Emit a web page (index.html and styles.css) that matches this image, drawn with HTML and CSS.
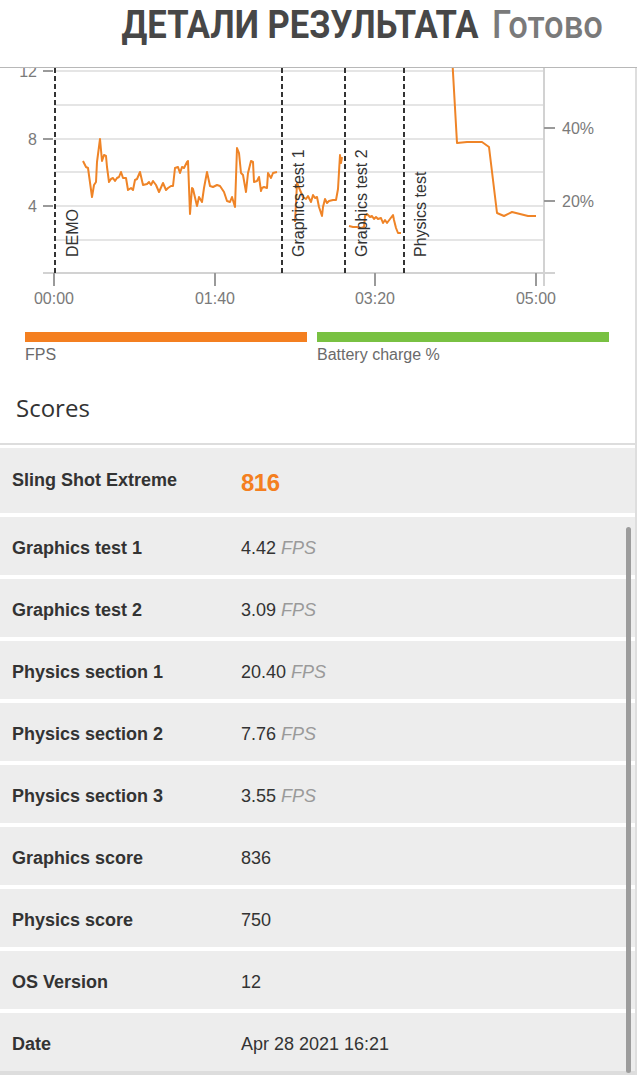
FILE: index.html
```html
<!DOCTYPE html>
<html lang="ru">
<head>
<meta charset="utf-8">
<title>Детали результата</title>
<link rel="stylesheet" href="styles.css">
</head>
<body>
<header class="topbar">
  <div class="title-group">
    <h1 class="title">ДЕТАЛИ РЕЗУЛЬТАТА</h1>
    <span class="done">Готово</span>
  </div>
</header>
<main class="content">
  <section class="chart">
    <svg class="chart-svg" width="635" height="250" viewBox="0 68 635 250" xmlns="http://www.w3.org/2000/svg">
      <g class="grid">
        <line x1="54" y1="71" x2="544" y2="71"/>
        <line x1="54" y1="105" x2="544" y2="105"/>
        <line x1="54" y1="139" x2="544" y2="139"/>
        <line x1="54" y1="172" x2="544" y2="172"/>
        <line x1="54" y1="206" x2="544" y2="206"/>
        <line x1="54" y1="240" x2="544" y2="240"/>
      </g>
      <line class="axis" x1="544" y1="60" x2="544" y2="286"/>
      <line class="axis" x1="43" y1="273" x2="555" y2="273"/>
      <g class="ticks">
        <line x1="43" y1="71" x2="53" y2="71"/>
        <line x1="43" y1="139" x2="53" y2="139"/>
        <line x1="43" y1="206" x2="53" y2="206"/>
        <line x1="54" y1="273" x2="54" y2="286"/>
        <line x1="215" y1="273" x2="215" y2="286"/>
        <line x1="375" y1="273" x2="375" y2="286"/>
        <line x1="536" y1="273" x2="536" y2="286"/>
        <line x1="544" y1="128" x2="555" y2="128"/>
        <line x1="544" y1="201" x2="555" y2="201"/>
      </g>
      <g class="tick-labels">
        <text x="37" y="77" text-anchor="end">12</text>
        <text x="37" y="145" text-anchor="end">8</text>
        <text x="37" y="212" text-anchor="end">4</text>
        <text x="54" y="304" text-anchor="middle">00:00</text>
        <text x="215" y="304" text-anchor="middle">01:40</text>
        <text x="375" y="304" text-anchor="middle">03:20</text>
        <text x="536" y="304" text-anchor="middle">05:00</text>
        <text x="562" y="134">40%</text>
        <text x="562" y="207">20%</text>
      </g>
      <g class="series">
        <polyline points="83,161 86,167 88,168 92,197 94,185 96,182 97,162 100,139 102,161 104,155 106,156 107,167 109,182 111,179 113,178 115,181 117,178 119,177 121,172 123,178 126,178 128,190 131,188 133,190 135,180 137,179 140,172 143,185 147,184 149,182 151,185 153,181 156,185 159,192 163,183 166,190 168,188 171,186 173,186 175,168 178,167 180,173 182,167 184,168 187,162 188,161 190,214 192,188 193,189 197,206 199,197 202,202 204,188 207,172 210,186 213,187 217,185 220,186 224,192 227,201 230,202 232,197 235,207 237,148 239,153 241,173 243,175 246,192 248,173 251,161 253,162 254,182 257,181 259,177 261,191 262,188 264,187 267,188 268,173 271,178 273,173 277,172"/>
        <polyline points="295,222 296,203 297,183 300,190 303,197 306,199 308,196 311,202 313,195 315,198 317,197 319,207 322,216 323,207 325,199 327,203 329,201 333,200 336,200 338,189 340,155 341,163 342,157"/>
        <polyline points="349,226 353,227 357,227 361,228 364,227 365,216 367,214 370,217 372,216 374,219 376,217 378,219 381,218 383,223 385,220 387,223 390,219 393,215 394,220 396,228 398,233 401,233"/>
        <polyline points="452,55 457,143 467,142 482,142 489,147 497,213 504,216 512,212 520,214 528,216 536,216"/>
      </g>
      <g class="markers">
        <line x1="55" y1="60" x2="55" y2="273"/>
        <line x1="282" y1="60" x2="282" y2="273"/>
        <line x1="345" y1="60" x2="345" y2="273"/>
        <line x1="404" y1="60" x2="404" y2="273"/>
      </g>
      <g class="marker-labels">
        <text transform="translate(78 257) rotate(-90)">DEMO</text>
        <text transform="translate(304 257) rotate(-90)">Graphics test 1</text>
        <text transform="translate(367 257) rotate(-90)">Graphics test 2</text>
        <text transform="translate(426 257) rotate(-90)">Physics test</text>
      </g>
    </svg>
  </section>

  <div class="legend">
    <div class="legend-item">
      <span class="legend-bar fps"></span>
      <span class="legend-label">FPS</span>
    </div>
    <div class="legend-item">
      <span class="legend-bar battery"></span>
      <span class="legend-label">Battery charge %</span>
    </div>
  </div>

  <h2 class="scores-title">Scores</h2>

  <div class="scores">
    <div class="row row-main">
      <span class="label main-label">Sling Shot Extreme</span>
      <span class="score">816</span>
    </div>
    <div class="row"><span class="label">Graphics test 1</span><span class="value">4.42 <em class="unit">FPS</em></span></div>
    <div class="row"><span class="label">Graphics test 2</span><span class="value">3.09 <em class="unit">FPS</em></span></div>
    <div class="row"><span class="label">Physics section 1</span><span class="value">20.40 <em class="unit">FPS</em></span></div>
    <div class="row"><span class="label">Physics section 2</span><span class="value">7.76 <em class="unit">FPS</em></span></div>
    <div class="row"><span class="label">Physics section 3</span><span class="value">3.55 <em class="unit">FPS</em></span></div>
    <div class="row"><span class="label">Graphics score</span><span class="value">836</span></div>
    <div class="row"><span class="label">Physics score</span><span class="value">750</span></div>
    <div class="row"><span class="label">OS Version</span><span class="value">12</span></div>
    <div class="row"><span class="label">Date</span><span class="value">Apr 28 2021 16:21</span></div>
    <div class="scrollbar"></div>
  </div>
  <div class="bottom-strip"></div>
</main>
</body>
</html>
```

FILE: styles.css
```css
html, body {
  margin: 0;
  padding: 0;
  background: #ffffff;
  overflow: hidden;
}

body {
  width: 637px;
  font-family: "Liberation Sans", Arial, sans-serif;
  color: #333333;
}

.topbar {
  height: 68px;
  box-sizing: border-box;
  border-bottom: 1px solid #b8b8b8;
  display: flex;
  justify-content: flex-end;
  padding: 6px 34px 0 0;
}

.title-group {
  display: flex;
  align-items: baseline;
  gap: 15px;
  transform: scaleX(0.91);
  transform-origin: right center;
  font-family: Roboto, "Noto Sans", sans-serif;
  font-size: 38px;
  line-height: 38px;
  font-weight: 500;
  white-space: nowrap;
}

.title {
  margin: 0;
  font-size: inherit;
  font-weight: 700;
  color: #474747;
}

.done {
  color: #7a7a7a;
  font-weight: 500;
}

.content {
  width: 635px;
  border-right: 2px solid #dedede;
  position: relative;
}

.chart {
  height: 250px;
}

.chart-svg {
  display: block;
  overflow: hidden;
}

.grid line {
  stroke: #dddddd;
  stroke-width: 1.5;
}

.axis {
  stroke: #d2d2d2;
  stroke-width: 2;
}

.ticks line {
  stroke: #9a9a9a;
  stroke-width: 2;
}

.tick-labels text {
  font-family: "Liberation Sans", Arial, sans-serif;
  font-size: 16px;
  fill: #7a7a7a;
}

.series polyline {
  fill: none;
  stroke: #ef8427;
  stroke-width: 2;
  stroke-linejoin: round;
}

.markers line {
  stroke: #333333;
  stroke-width: 2;
  stroke-dasharray: 5 3;
}

.marker-labels text {
  font-family: "Liberation Sans", Arial, sans-serif;
  font-size: 16px;
  fill: #333333;
}

.legend {
  display: grid;
  grid-template-columns: 282px 292px;
  column-gap: 10px;
  margin: 14px 0 0 25px;
}

.legend-item {
  display: flex;
  flex-direction: column;
}

.legend-bar {
  display: block;
  height: 10px;
}

.legend-bar.fps {
  background: #f47f20;
}

.legend-bar.battery {
  background: #79c142;
}

.legend-label {
  margin-top: 4px;
  font-size: 16px;
  line-height: 18px;
  color: #6a6a6a;
}

.scores-title {
  margin: 28px 0 0 0;
  padding: 0 0 19px 16px;
  height: 32px;
  border-bottom: 2px solid #dddddd;
  font-family: "Open Sans", "Noto Sans", sans-serif;
  font-weight: 400;
  font-size: 24px;
  line-height: 32px;
  color: #333333;
}

.scores {
  position: relative;
  display: flex;
  flex-direction: column;
  gap: 4px;
  margin-top: 3px;
}

.row {
  display: grid;
  grid-template-columns: 229px 1fr;
  align-items: center;
  box-sizing: border-box;
  height: 58px;
  padding: 4px 0 0 12px;
  background: #ededed;
  font-size: 18px;
  line-height: 20px;
}

.row-main {
  height: 65px;
}

.label {
  font-weight: 700;
  color: #333333;
}

.main-label {
  padding-bottom: 6px;
}

.value {
  color: #333333;
}

.unit {
  color: #9a9a9a;
  font-style: italic;
}

.score {
  font-family: "Liberation Sans", Arial, sans-serif;
  font-weight: 700;
  font-size: 24px;
  color: #f47f20;
  letter-spacing: -0.5px;
}

.scrollbar {
  position: absolute;
  right: 4px;
  top: 79px;
  width: 5px;
  bottom: -2px;
  border-radius: 3px;
  background: #9c9c9c;
}

.bottom-strip {
  height: 20px;
  background: #dddddd;
}
```
